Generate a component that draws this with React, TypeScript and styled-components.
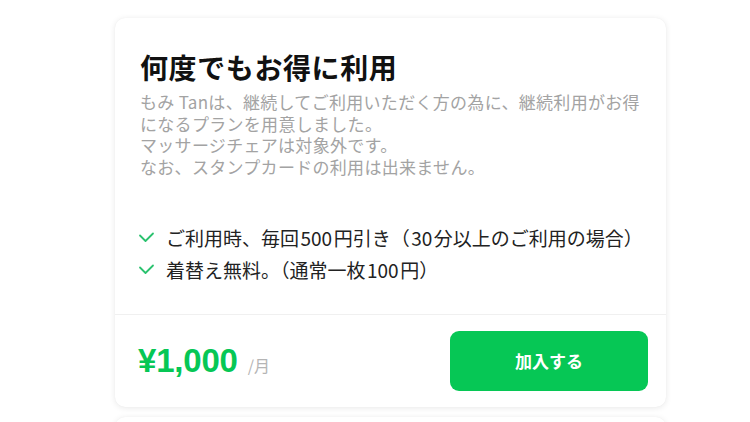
import React from "react";
import styled, { createGlobalStyle } from "styled-components";

const GlobalStyle = createGlobalStyle`
  html, body {
    margin: 0;
    padding: 0;
    background: #ffffff;
    font-family: "Noto Sans CJK JP", "Noto Sans", sans-serif;
    -webkit-font-smoothing: antialiased;
  }
`;

const Page = styled.div`
  width: 750px;
  height: 422px;
  overflow: hidden;
  padding: 18px 0 0 115px;
  box-sizing: border-box;
  display: flex;
  flex-direction: column;
  gap: 10px;
`;

const Card = styled.section`
  width: 551px;
  flex-shrink: 0;
  background: #ffffff;
  border-radius: 10px;
  box-shadow: 0 1px 6px rgba(0, 0, 0, 0.09), 0 0 1px rgba(0, 0, 0, 0.06);
  overflow: hidden;
`;

const Body = styled.div`
  padding: 30px 25px 31px 25px;
  border-bottom: 1px solid #f0f0f0;
`;

const Title = styled.h2`
  margin: 0;
  font-size: 28px;
  line-height: 38px;
  font-weight: 700;
  color: #111111;
  letter-spacing: 0.6px;
`;

const Description = styled.p`
  margin: 5px 0 0 0;
  font-size: 17px;
  line-height: 21.7px;
  color: #a3a3a3;
  letter-spacing: 0.3px;
  white-space: nowrap;
`;

const Features = styled.ul`
  list-style: none;
  margin: 47px 0 0 0;
  padding: 0;
  display: flex;
  flex-direction: column;
  gap: 6px;
`;

const Feature = styled.li`
  display: flex;
  align-items: center;
  gap: 11px;
  font-size: 19px;
  line-height: 26px;
  color: #222222;
  white-space: nowrap;
`;

const Num = styled.span`
  margin: 0 0.08em;
`;

const CheckMark = styled.svg`
  width: 17px;
  height: 12px;
  flex-shrink: 0;
  margin-left: -2px;
`;

const Footer = styled.div`
  height: 92px;
  padding: 0 18px 0 23px;
  display: flex;
  align-items: center;
  justify-content: space-between;
`;

const PriceGroup = styled.div`
  display: flex;
  align-items: baseline;
  gap: 10px;
`;

const Price = styled.span`
  font-family: "Liberation Sans", Arial, sans-serif;
  font-size: 33px;
  font-weight: 700;
  color: #06c755;
  letter-spacing: -0.2px;
`;

const Unit = styled.span`
  font-size: 16px;
  color: #b5b5b5;
`;

const JoinButton = styled.button`
  width: 198px;
  height: 60px;
  border: none;
  border-radius: 9px;
  background: #06c755;
  color: #ffffff;
  font-family: "Noto Sans CJK JP", sans-serif;
  font-size: 17px;
  font-weight: 700;
  cursor: pointer;
`;

const NextCard = styled(Card)`
  height: 60px;
`;

const Check = () => (
  <CheckMark viewBox="0 0 17 12">
    <polyline
      points="2,3.5 7.5,9 15,1.5"
      fill="none"
      stroke="#2bc26f"
      strokeWidth="1.8"
      strokeLinecap="round"
      strokeLinejoin="round"
    />
  </CheckMark>
);

export default function App() {
  return (
    <>
      <GlobalStyle />
      <Page>
        <Card>
          <Body>
            <Title>何度でもお得に利用</Title>
            <Description>
              もみ Tanは、継続してご利用いただく方の為に、継続利用がお得
              <br />
              になるプランを用意しました。
              <br />
              マッサージチェアは対象外です。
              <br />
              なお、スタンプカードの利用は出来ません。
            </Description>
            <Features>
              <Feature>
                <Check />
                <span>
                  ご利用時、毎回<Num>500</Num>円引き（<Num>30</Num>分以上のご利用の場合）
                </span>
              </Feature>
              <Feature>
                <Check />
                <span>
                  着替え無料。（通常一枚<Num>100</Num>円）
                </span>
              </Feature>
            </Features>
          </Body>
          <Footer>
            <PriceGroup>
              <Price>¥1,000</Price>
              <Unit>/月</Unit>
            </PriceGroup>
            <JoinButton>加入する</JoinButton>
          </Footer>
        </Card>
        <NextCard />
      </Page>
    </>
  );
}
